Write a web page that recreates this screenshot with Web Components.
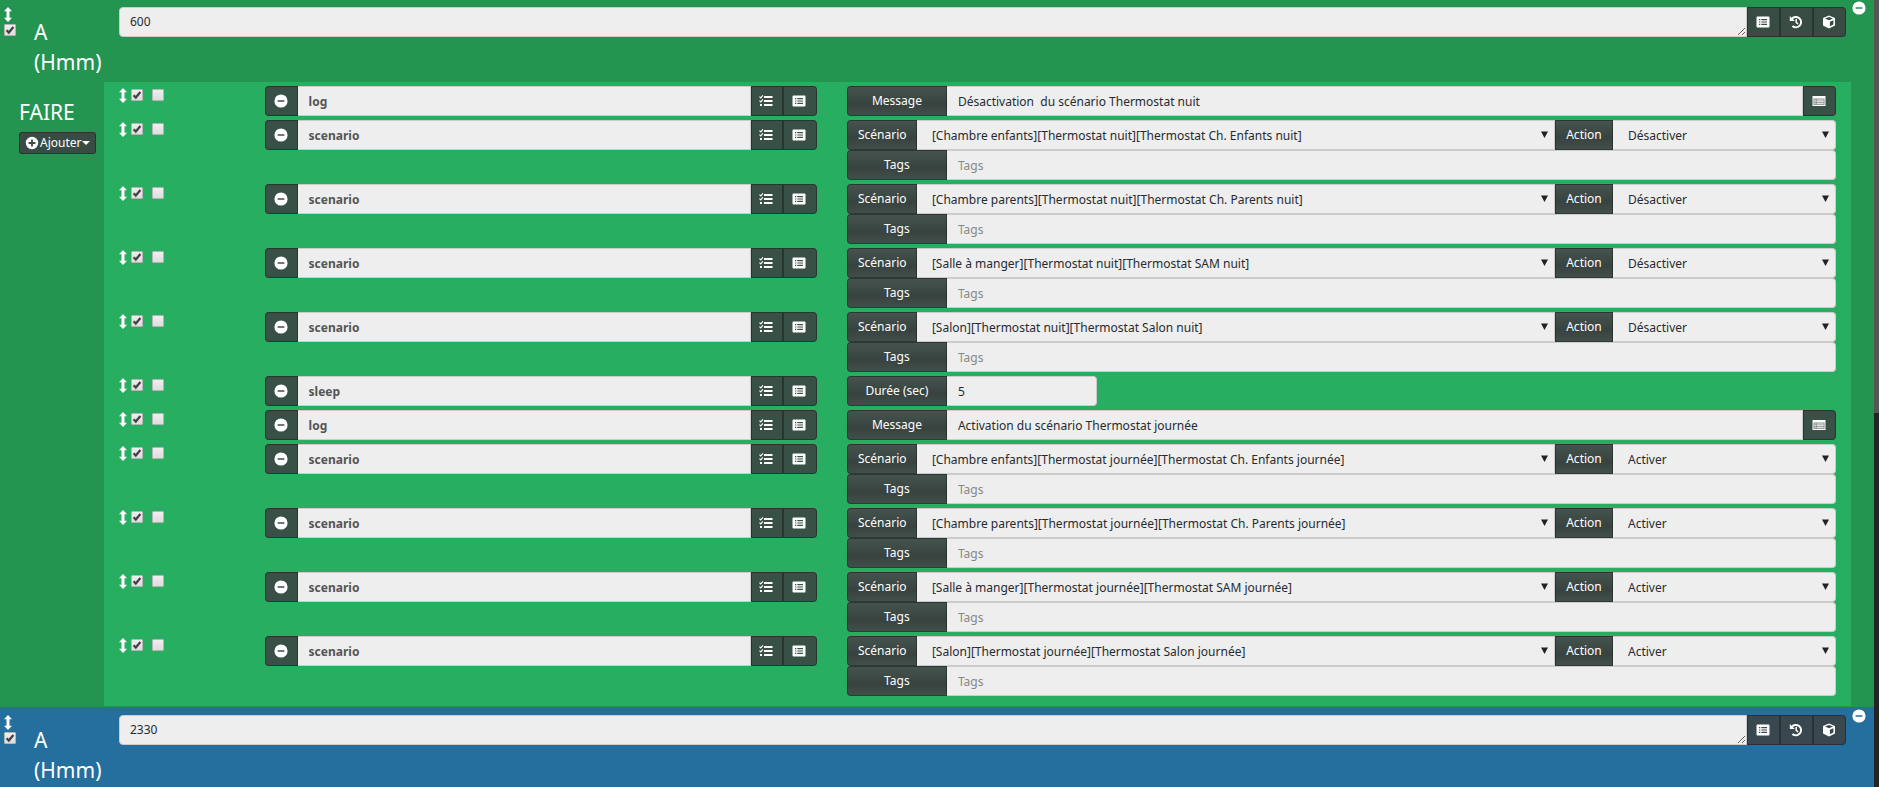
<!DOCTYPE html>
<html lang="fr">
<head>
<meta charset="utf-8">
<title>Scénario</title>
<style>
html { background: #256f9e; }
body { margin: 0; height: 100vh; overflow: hidden; font: 12px/20px "Noto Sans", "Open Sans", sans-serif; color: #fff; }
</style>
</head>
<body>
<scenario-page></scenario-page>
<script>
const svg = (body, w = 14, cls = "") => `<svg class="${cls}" width="${w}" height="14" viewBox="0 0 14 14" aria-hidden="true">${body}</svg>`;
const ICONS = {
  minus: '<path fill="currentColor" fill-rule="evenodd" d="M7 .4a6.6 6.6 0 1 1 0 13.2A6.6 6.6 0 0 1 7 .4ZM3.6 6.2v1.6h6.8V6.2Z"/>',
  plus: '<path fill="currentColor" fill-rule="evenodd" d="M7 .8a6.2 6.2 0 1 1 0 12.4A6.2 6.2 0 0 1 7 .8ZM6.1 3.6v2.5H3.6v1.8h2.5v2.5h1.8V7.9h2.5V6.1H7.9V3.6Z"/>',
  arrows: '<path fill="currentColor" d="M7 0l4 4H8.5v6H11l-4 4-4-4h2.5V4H3Z"/>',
  list: '<path fill="currentColor" fill-rule="evenodd" d="M1.5 1.5h11q1 0 1 1v9q0 1-1 1h-11q-1 0-1-1v-9q0-1 1-1ZM3 4v1.2h1.3V4Zm2.3 0v1.2H11V4ZM3 6.4v1.2h1.3V6.4Zm2.3 0v1.2H11V6.4ZM3 8.8V10h1.3V8.8Zm2.3 0V10H11V8.8Z"/>',
  tasks: '<path fill="currentColor" d="M5 2h8.5v2H5ZM5 6h8.5v2H5ZM5 10h8.5v2H5ZM1 10.1h2v1.9H1Z"/><path fill="none" stroke="currentColor" stroke-width="1.1" d="M.5 2.7l1.2 1.2L4 1.4M.5 6.7l1.2 1.2L4 5.4"/>',
  history: '<path fill="none" stroke="currentColor" stroke-width="1.9" d="M2.6 4.2A5.2 5.2 0 1 1 3.4 11"/><path fill="currentColor" d="M.8 1v5h5Z"/><path fill="none" stroke="currentColor" stroke-width="1.5" d="M7.2 4v3.4l2 1.6"/>',
  cube: '<path fill="currentColor" fill-rule="evenodd" d="M7 .6l6 2.3v7.7L7 13.4 1 10.6V2.9ZM7 2.1L3 3.6l4 1.6 4-1.6ZM7.9 6.7v4.6l3.5-1.7V5.3Z"/>',
  table: '<path fill="currentColor" d="M.5 2h13v10H.5Z"/><path fill="#7b8782" fill-rule="evenodd" d="M1.5 4.6h11V11h-11ZM2.3 5.4v1h1.5v-1Zm2.3 0v1h7.1v-1ZM2.3 7.3v1h1.5v-1Zm2.3 0v1h7.1v-1ZM2.3 9.2v1h1.5v-1Zm2.3 0v1h7.1v-1Z"/>'
};
const BASE = `
  *, *::before { box-sizing: border-box; }
  :host { display: block; }
  svg { display: block; }
  button, input, select, textarea { font: inherit; margin: 0; }
`;
const define = (name, html, setup) => {
  const t = document.createElement("template");
  t.innerHTML = html;
  customElements.define(name, class extends HTMLElement {
    connectedCallback() {
      if (this.shadowRoot) return;
      const root = this.attachShadow({ mode: "open" });
      root.append(t.content.cloneNode(true));
      if (setup) setup(this, root);
    }
  });
};

define("icon-button", `<style>${BASE}
  :host { flex: none; width: 33px; }
  button { display: grid; place-items: center; width: 100%; height: 30px; padding: 0 1px 1px 0; color: #fff; cursor: pointer;
    background: rgba(60,64,66,.86); border: 1px solid rgba(0,0,0,.3); border-radius: var(--radius, 0); }
</style><button type="button"></button>`, (el, root) => {
  const b = root.querySelector("button");
  b.innerHTML = svg(ICONS[el.getAttribute("icon")]);
  b.setAttribute("aria-label", el.getAttribute("label"));
});

define("check-box", `<style>${BASE}
  :host { width: 12px; height: 12px; }
  input { appearance: none; display: block; width: 12px; height: 12px; background: linear-gradient(#eee, #ddd); border: 1px solid #b5b5b5; border-radius: 1px; }
  input:checked { background: url('data:image/svg+xml,<svg xmlns="http://www.w3.org/2000/svg" viewBox="0 0 10 10"><path d="M1.6 5.2l2.2 2.3L8.4 2" fill="none" stroke="%23404048" stroke-width="2.2"/></svg>') center/10px no-repeat, linear-gradient(#eee, #ddd); }
</style><input type="checkbox">`, (el, root) => {
  const i = root.querySelector("input");
  i.checked = el.hasAttribute("checked");
  i.setAttribute("aria-label", el.getAttribute("label"));
});

define("drag-handle", `<style>${BASE}
  :host { width: 8px; cursor: ns-resize; }
  svg { height: 15px; width: 8px; }
</style><svg viewBox="3 0 8 14" preserveAspectRatio="none" aria-hidden="true">${ICONS.arrows}</svg>`);

define("field-label", `<style>${BASE}
  :host { flex: none; }
  label { display: block; height: 30px; line-height: 28px; padding: 0 10px; text-align: center; white-space: nowrap; color: #fff;
    background: linear-gradient(#45534f, #38433f 60%, #424e4a); border: 1px solid rgba(0,0,0,.3); border-radius: var(--radius, 0); }
</style><label><slot></slot></label>`);

define("text-field", `<style>${BASE}
  :host { flex: 1; min-width: 0; }
  input { display: block; width: 100%; height: 30px; padding: 0 11px; background: #eee; border: 1px solid #ccc; border-left: 0; border-radius: var(--radius, 0); outline: 0; font-weight: var(--weight, 400); color: var(--ink, #272b30); }
  input::placeholder { color: #888; opacity: 1; }
</style><input type="text">`, (el, root) => {
  const i = root.querySelector("input");
  i.value = el.getAttribute("value") || "";
  i.placeholder = el.getAttribute("placeholder") || "";
  i.setAttribute("aria-label", el.getAttribute("label"));
});

define("select-field", `<style>${BASE}
  :host { min-width: 0; }
  select { appearance: none; display: block; width: 100%; height: 30px; padding: 1px 24px 0 15px; color: #272b30; border: 1px solid #ccc; border-left: 0; border-radius: var(--radius, 0); outline: 0;
    background: #eee url('data:image/svg+xml,<svg xmlns="http://www.w3.org/2000/svg" viewBox="0 0 7 7"><path d="M0 .5h7L3.5 7Z" fill="%23222"/></svg>') right 6px top 10px/7px no-repeat; }
</style><select><option></option></select>`, (el, root) => {
  root.querySelector("option").textContent = el.getAttribute("value");
  root.querySelector("select").setAttribute("aria-label", el.getAttribute("label"));
});

define("action-row", `<style>${BASE}
  :host { display: grid; grid-template-columns: 1fr 4fr 7fr; padding-bottom: 4px; }
  .tools { display: flex; align-items: flex-start; padding: 2px 0 0 15px; }
  .tools check-box { margin: 1px 0 0 4px; }
  .tools check-box + check-box { margin-left: 9px; }
  .cell { padding: 0 15px; min-width: 0; }
  .group { display: flex; }
  .name { --weight: 700; --ink: #555; }
  .first { --radius: 4px 0 0 4px; }
  .last { --radius: 0 4px 4px 0; }
  .group > .wide { width: 100px; }
  .group > .narrow { width: 70px; }
  .group > .action { width: 58px; }
  .scene { flex: 1; }
  .verb { flex: none; width: 223px; }
  .short { flex: none; width: 150px; }
  icon-button.mid { width: 32px; }
  icon-button.last { width: 34px; }
  icon-button.solo { width: 33px; }
</style>
<div class="tools"><drag-handle></drag-handle><check-box checked label="Activer"></check-box><check-box label="Parallèle"></check-box></div>
<div class="cell"><div class="group"><icon-button class="first" icon="minus" label="Supprimer"></icon-button><slot name="name"></slot><icon-button class="mid" icon="tasks" label="Choisir une action"></icon-button><icon-button class="last" icon="list" label="Choisir une commande"></icon-button></div></div>
<div class="cell options"></div>`, (el, root) => {
  const kind = el.getAttribute("kind"), value = el.getAttribute("value");
  root.querySelector("slot").outerHTML = `<text-field class="name" label="Action" value="${kind}"></text-field>`;
  root.querySelector(".options").innerHTML = {
    log: `<div class="group"><field-label class="wide first">Message</field-label><text-field label="Message" value="${value}"></text-field><icon-button class="last solo" icon="table" label="Choisir"></icon-button></div>`,
    sleep: `<div class="group"><field-label class="wide first">Durée (sec)</field-label><text-field class="short last" label="Durée" value="${value}"></text-field></div>`,
    scenario: `<div class="group"><field-label class="narrow first">Scénario</field-label><select-field class="scene" label="Scénario" value="${value}"></select-field><field-label class="action">Action</field-label><select-field class="verb last" label="Action" value="${el.getAttribute("verb")}"></select-field></div>
      <div class="group"><field-label class="wide first">Tags</field-label><text-field class="last" label="Tags" placeholder="Tags"></text-field></div>`
  }[kind];
});

define("time-block", `<style>${BASE}
  :host { background: var(--block); padding-top: 8px; }
  header { display: grid; grid-template-columns: 104px 1fr 28px; height: 75px; }
  .side { display: flex; }
  .marks { flex: none; width: 34px; padding-left: 4px; }
  .marks check-box { margin-top: 2px; }
  h2 { margin: 10px 0 0; font-size: 21px; line-height: 30px; font-weight: 400; width: 70px; }
  .group { display: flex; padding-left: 15px; }
  textarea { flex: 1; min-width: 0; height: 30px; min-height: 30px; padding: 4px 10px; line-height: 20px; overflow: hidden; color: #272b30; background: #eee; border: 1px solid #ccc; border-radius: 4px 0 0 4px; outline: 0; }
  icon-button:last-child { --radius: 0 4px 4px 0; }
  .remove { display: block; width: 14px; height: 14px; margin: -6px 0 0 6px; padding: 0; color: #fff; background: none; border: 0; }
</style>
<header>
  <div class="side"><div class="marks"><drag-handle></drag-handle><check-box checked label="Activer le bloc"></check-box></div><h2>A<br>(Hmm)</h2></div>
  <div class="group"><textarea aria-label="Heure" rows="1"></textarea><icon-button icon="list" label="Commande"></icon-button><icon-button icon="history" label="Historique"></icon-button><icon-button icon="cube" label="Équipement"></icon-button></div>
  <button class="remove" type="button" aria-label="Supprimer le bloc">${svg(ICONS.minus)}</button>
</header>
<slot></slot>`, (el, root) => root.querySelector("textarea").value = el.getAttribute("time"));

define("do-section", `<style>${BASE}
  :host { display: grid; grid-template-columns: 104px 1fr 23px; padding-bottom: 1px; }
  aside { padding: 15px 0 0 19px; }
  h2 { margin: 0; font-size: 21px; line-height: 30px; font-weight: 400; }
  button { display: flex; align-items: center; width: 77px; height: 22px; margin-top: 5px; padding: 0 5px; line-height: 20px; color: #fff; background: rgba(60,64,66,.86); border: 1px solid rgba(0,0,0,.3); border-radius: 3px; }
  button svg { flex: none; margin-right: 1px; }
  button i { flex: none; border: 4px solid transparent; border-top-color: #fff; border-bottom: 0; }
  .rows { background: #27ae60; padding: 4px 0 6px; }
</style>
<aside><h2>FAIRE</h2><button type="button">${svg(ICONS.plus)}<span>Ajouter</span><i></i></button></aside>
<div class="rows"><slot></slot></div>`);

define("scenario-page", `<style>${BASE}
  :host { display: grid; grid-template-columns: 1fr 5px; height: 100vh; overflow: hidden; }
  main { margin-top: -1px; min-width: 0; }
  .green { --block: #249451; }
  .blue { --block: #256f9e; }
  .track { background: linear-gradient(#555 413px, #222428 0); }
</style>
<main>
<time-block class="green" time="600"><do-section>
  <action-row kind="log" value="Désactivation  du scénario Thermostat nuit"></action-row>
  <action-row kind="scenario" value="[Chambre enfants][Thermostat nuit][Thermostat Ch. Enfants nuit]" verb="Désactiver"></action-row>
  <action-row kind="scenario" value="[Chambre parents][Thermostat nuit][Thermostat Ch. Parents nuit]" verb="Désactiver"></action-row>
  <action-row kind="scenario" value="[Salle à manger][Thermostat nuit][Thermostat SAM nuit]" verb="Désactiver"></action-row>
  <action-row kind="scenario" value="[Salon][Thermostat nuit][Thermostat Salon nuit]" verb="Désactiver"></action-row>
  <action-row kind="sleep" value="5"></action-row>
  <action-row kind="log" value="Activation du scénario Thermostat journée"></action-row>
  <action-row kind="scenario" value="[Chambre enfants][Thermostat journée][Thermostat Ch. Enfants journée]" verb="Activer"></action-row>
  <action-row kind="scenario" value="[Chambre parents][Thermostat journée][Thermostat Ch. Parents journée]" verb="Activer"></action-row>
  <action-row kind="scenario" value="[Salle à manger][Thermostat journée][Thermostat SAM journée]" verb="Activer"></action-row>
  <action-row kind="scenario" value="[Salon][Thermostat journée][Thermostat Salon journée]" verb="Activer"></action-row>
</do-section></time-block>
<time-block class="blue" time="2330"></time-block>
</main>
<div class="track"></div>`);
</script>
</body>
</html>
